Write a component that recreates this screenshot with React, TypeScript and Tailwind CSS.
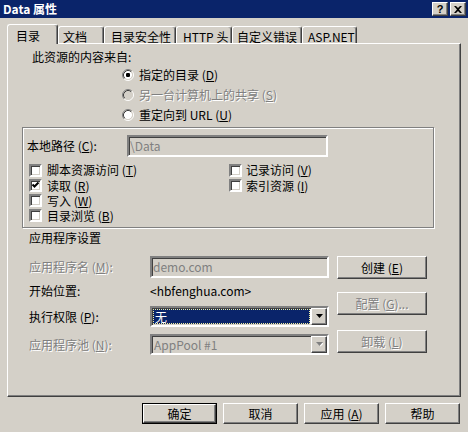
import React from "react";

const sunken =
  "border-2 border-t-[#808080] border-l-[#808080] border-b-white border-r-white shadow-[inset_1px_1px_0_#404040,inset_-1px_-1px_0_#d4d0c8]";
const raised =
  "border border-t-white border-l-white border-b-[#404040] border-r-[#404040] shadow-[inset_-1px_-1px_0_#808080]";
const dis = "text-[#808080] [text-shadow:1px_1px_0_#ffffff]";

function U({ children }: { children: React.ReactNode }) {
  return <span className="underline underline-offset-[1px]">{children}</span>;
}

function Radio({ checked, disabled }: { checked?: boolean; disabled?: boolean }) {
  return (
    <svg width="12" height="12" viewBox="0 0 12 12" className="shrink-0">
      <circle cx="6" cy="6" r="4.2" fill={disabled ? "#d4d0c8" : "#ffffff"} />
      <path d="M2.11 9.89 A5.5 5.5 0 0 1 9.89 2.11" stroke="#808080" strokeWidth="1" fill="none" />
      <path d="M9.89 2.11 A5.5 5.5 0 0 1 2.11 9.89" stroke="#ffffff" strokeWidth="1" fill="none" />
      <path d="M2.82 9.18 A4.5 4.5 0 0 1 9.18 2.82" stroke="#404040" strokeWidth="1" fill="none" />
      <path d="M9.18 2.82 A4.5 4.5 0 0 1 2.82 9.18" stroke="#d4d0c8" strokeWidth="1" fill="none" />
      {checked && <rect x="4" y="4" width="4" height="4" rx="1.2" fill="#000" />}
    </svg>
  );
}

function Check({ checked }: { checked?: boolean }) {
  return (
    <span className={`w-[13px] h-[13px] bg-white shrink-0 flex items-center justify-center ${sunken}`}>
      {checked && (
        <svg width="9" height="9" viewBox="0 0 9 9">
          <path d="M1.5 3.5 L3.5 5.5 L7.5 1.5" stroke="#000" strokeWidth="2" fill="none" />
        </svg>
      )}
    </span>
  );
}

function Btn({
  children,
  disabled,
  def,
  w,
  h,
}: {
  children: React.ReactNode;
  disabled?: boolean;
  def?: boolean;
  w: string;
  h: string;
}) {
  const inner = (
    <div className={`flex-1 flex items-center justify-center bg-[#d4d0c8] ${raised} ${disabled ? dis : ""}`}>
      {children}
    </div>
  );
  if (def) {
    return <div className={`${w} ${h} border border-black flex`}>{inner}</div>;
  }
  return <div className={`${w} ${h} flex`}>{inner}</div>;
}

function Arrow({ disabled }: { disabled?: boolean }) {
  return (
    <div className={`w-[16px] h-[17px] bg-[#d4d0c8] flex items-center justify-center ${raised}`}>
      <svg width="7" height="5" viewBox="0 0 7 5">
        {disabled && <path d="M1 1 H8 L4.5 4.5 Z" fill="#ffffff" />}
        <path d="M0 0 H7 L3.5 4 Z" fill={disabled ? "#808080" : "#000"} />
      </svg>
    </div>
  );
}

function Tab({
  label,
  w,
  pl,
  selected,
}: {
  label: React.ReactNode;
  w: string;
  pl: string;
  selected?: boolean;
}) {
  return (
    <div
      className={`${w} ${pl} ${
        selected ? "h-[20px] -mb-[1px] relative z-10 pt-[4px]" : "h-[17px] pt-[3px]"
      } bg-[#d4d0c8] border-t border-l border-t-white border-l-white border-r border-r-[#404040] shadow-[inset_-1px_0_0_#808080] rounded-tl-[3px] rounded-tr-[3px] whitespace-nowrap`}
    >
      {label}
    </div>
  );
}

export default function App() {
  return (
    <div className="w-[468px] h-[432px] bg-[#d4d0c8] font-['Noto_Sans_CJK_SC',sans-serif] text-[12px] leading-[14px] text-black overflow-hidden select-none">
      {/* Title bar */}
      <div className="h-[18px] bg-[#0a246a] flex items-center justify-between pl-[3px] pr-[2px]">
        <span className="text-white font-bold text-[12px] leading-[14px]">Data 属性</span>
        <div className="flex gap-[2px]">
          <div className={`w-[16px] h-[14px] bg-[#d4d0c8] flex items-center justify-center ${raised}`}>
            <span className="font-bold text-[11px] leading-[11px] font-['Liberation_Sans',sans-serif]">?</span>
          </div>
          <div className={`w-[16px] h-[14px] bg-[#d4d0c8] flex items-center justify-center ${raised}`}>
            <svg width="8" height="7" viewBox="0 0 8 7">
              <path d="M0 0 H2 L4 2 L6 0 H8 L5 3.5 L8 7 H6 L4 5 L2 7 H0 L3 3.5 Z" fill="#000" />
            </svg>
          </div>
        </div>
      </div>

      <div className="pl-[7px] pt-[6px]">
        {/* Tabs */}
        <div className="flex items-end h-[19px]">
          <Tab label="目录" w="w-[51px]" pl="pl-[8px]" selected />
          <Tab label="文档" w="w-[46px]" pl="pl-[4px]" />
          <Tab label="目录安全性" w="w-[72px]" pl="pl-[6px]" />
          <Tab label="HTTP 头" w="w-[56px]" pl="pl-[6px]" />
          <Tab label="自定义错误" w="w-[70px]" pl="pl-[4px]" />
          <Tab label="ASP.NET" w="w-[55px]" pl="pl-[5px]" />
        </div>

        {/* Panel */}
        <div className="w-[454px] h-[354px] border border-t-white border-l-white border-r-[#404040] border-b-[#404040] shadow-[inset_-1px_-1px_0_#808080] flex flex-col">
          <div className="mt-[6px] pl-[24px] h-[14px]">此资源的内容来自:</div>

          <div className="mt-[1px] pl-[114px] flex flex-col">
            <div className="h-[20px] flex items-center gap-[5px]">
              <Radio checked />
              <span>
                指定的目录 (<U>D</U>)
              </span>
            </div>
            <div className="h-[20px] flex items-center gap-[5px]">
              <Radio disabled />
              <span className={dis}>
                另一台计算机上的共享 (<U>S</U>)
              </span>
            </div>
            <div className="h-[19px] flex items-center gap-[5px]">
              <Radio />
              <span>
                重定向到 URL (<U>U</U>)
              </span>
            </div>
          </div>

          {/* Group box */}
          <div className="mt-[3px] ml-[14px] w-[412px] h-[101px] border border-[#808080] shadow-[inset_1px_1px_0_#ffffff,1px_1px_0_#ffffff] flex flex-col">
            <div className="mt-[7px] pl-[4px] flex items-center">
              <span className="w-[100px]">
                本地路径 (<U>C</U>):
              </span>
              <div className={`w-[201px] h-[22px] bg-[#d4d0c8] ${sunken} flex items-center pl-[1px] text-[#808080]`}>
                \Data
              </div>
            </div>
            <div className="mt-[5px] pl-[6px] flex">
              <div className="w-[200px] flex flex-col">
                <div className="h-[16px] flex items-center gap-[5px]">
                  <Check />
                  <span>
                    脚本资源访问 (<U>T</U>)
                  </span>
                </div>
                <div className="h-[15px] flex items-center gap-[5px]">
                  <Check checked />
                  <span>
                    读取 (<U>R</U>)
                  </span>
                </div>
                <div className="h-[15px] flex items-center gap-[5px]">
                  <Check />
                  <span>
                    写入 (<U>W</U>)
                  </span>
                </div>
                <div className="h-[15px] flex items-center gap-[5px]">
                  <Check />
                  <span>
                    目录浏览 (<U>B</U>)
                  </span>
                </div>
              </div>
              <div className="flex flex-col">
                <div className="h-[16px] flex items-center gap-[4px]">
                  <Check />
                  <span>
                    记录访问 (<U>V</U>)
                  </span>
                </div>
                <div className="h-[15px] flex items-center gap-[4px]">
                  <Check />
                  <span>
                    索引资源 (<U>I</U>)
                  </span>
                </div>
              </div>
            </div>
          </div>

          <div className="mt-[3px] pl-[21px] h-[14px]">应用程序设置</div>

          <div className="pl-[21px] flex">
            <div className="w-[300px] flex flex-col">
              <div className="mt-[11px] h-[22px] flex items-center">
                <span className={`w-[121px] ${dis}`}>
                  应用程序名 (<U>M</U>):
                </span>
                <div className={`w-[179px] h-[22px] bg-[#d4d0c8] ${sunken} flex items-center pl-[1px] text-[#808080]`}>
                  demo.com
                </div>
              </div>
              <div className="h-[26px] flex items-center">
                <span className="w-[121px]">开始位置:</span>
                <span>&lt;hbfenghua.com&gt;</span>
              </div>
              <div className="mt-[2px] h-[21px] flex items-center">
                <span className="w-[121px]">
                  执行权限 (<U>P</U>):
                </span>
                <div className={`w-[179px] h-[21px] bg-white ${sunken} flex items-center`}>
                  <div className="flex-1 h-[15px] mx-[1px] bg-[#0a246a] border border-dotted border-[#f0f0a0] text-white flex items-center pl-[1px]">
                    无
                  </div>
                  <Arrow />
                </div>
              </div>
              <div className="mt-[7px] h-[21px] flex items-center">
                <span className={`w-[121px] ${dis}`}>
                  应用程序池 (<U>N</U>):
                </span>
                <div className={`w-[179px] h-[21px] bg-[#d4d0c8] ${sunken} flex items-center`}>
                  <div className="flex-1 pl-[2px] text-[#808080]">AppPool #1</div>
                  <Arrow disabled />
                </div>
              </div>
            </div>
            <div className="ml-[8px] flex flex-col">
              <div className="mt-[11px]">
                <Btn w="w-[90px]" h="h-[23px]">
                  创建 (<U>E</U>)
                </Btn>
              </div>
              <div className="mt-[13px]">
                <Btn w="w-[90px]" h="h-[23px]" disabled>
                  配置 (<U>G</U>)...
                </Btn>
              </div>
              <div className="mt-[15px]">
                <Btn w="w-[90px]" h="h-[23px]" disabled>
                  卸载 (<U>L</U>)
                </Btn>
              </div>
            </div>
          </div>
        </div>

        {/* Bottom buttons */}
        <div className="w-[454px] mt-[6px] pr-[1px] flex justify-end gap-[6px]">
          <Btn w="w-[75px]" h="h-[21px]" def>
            确定
          </Btn>
          <Btn w="w-[75px]" h="h-[21px]">
            取消
          </Btn>
          <Btn w="w-[75px]" h="h-[21px]">
            应用 (<U>A</U>)
          </Btn>
          <Btn w="w-[75px]" h="h-[21px]">
            帮助
          </Btn>
        </div>
      </div>
    </div>
  );
}
